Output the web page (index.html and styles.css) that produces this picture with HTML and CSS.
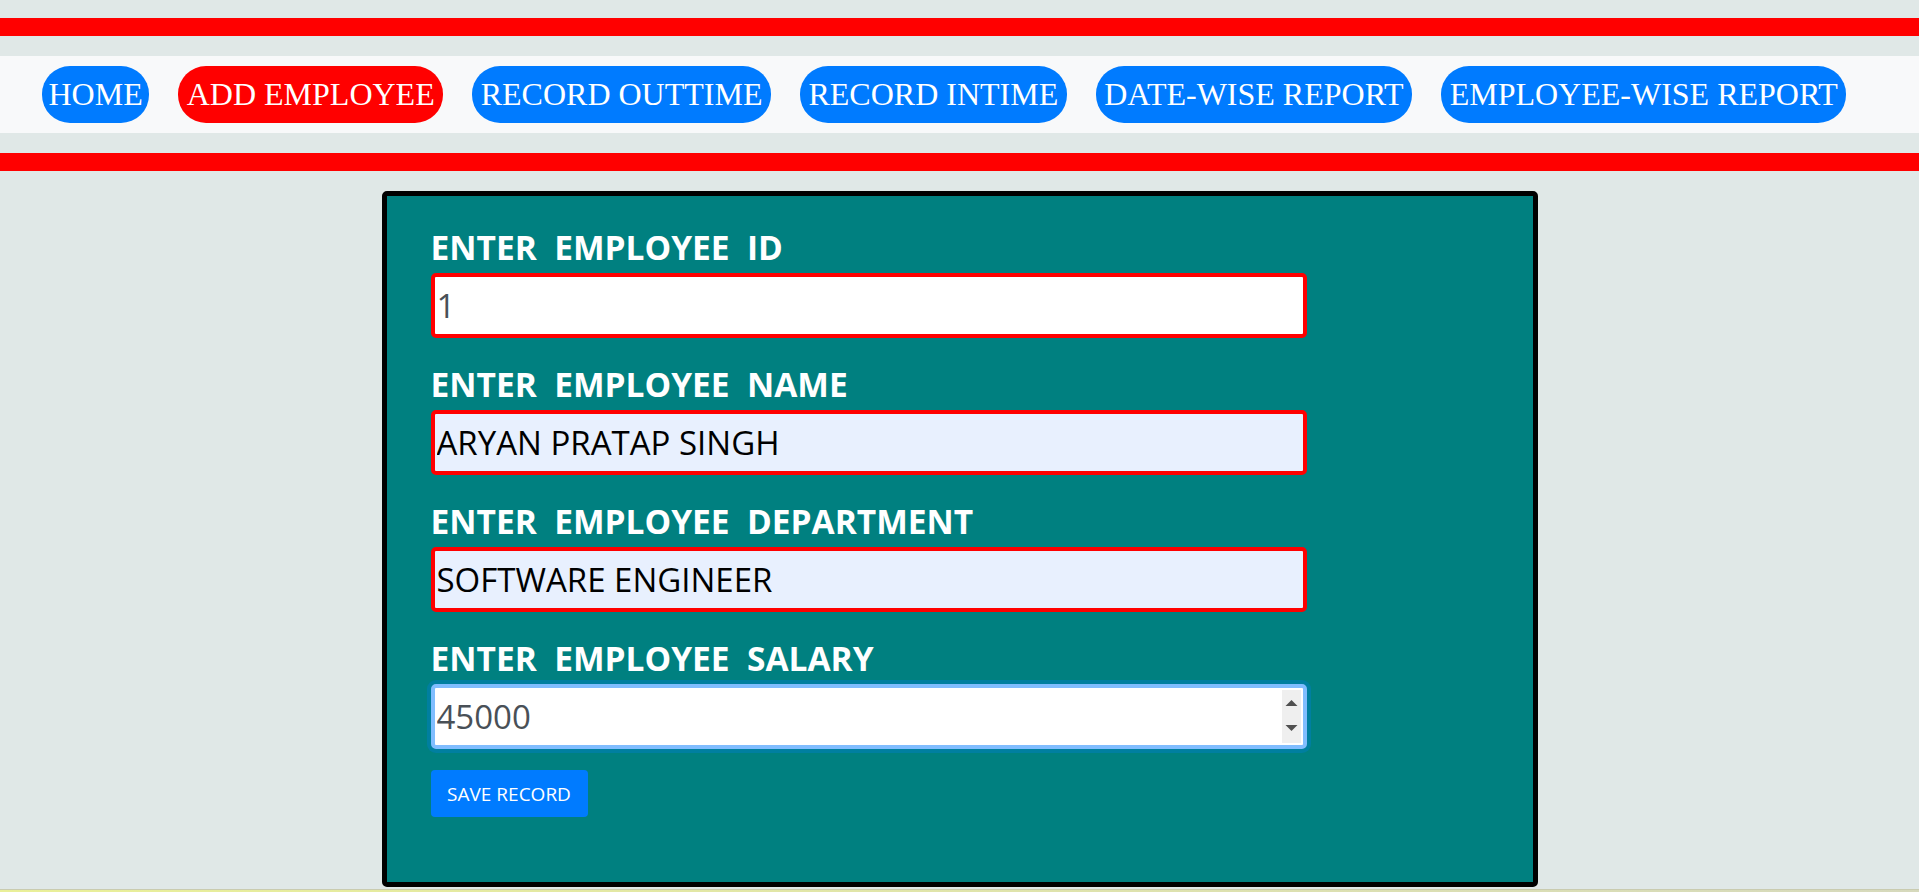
FILE: index.html
```html
<!DOCTYPE html>
<html lang="en">
<head>
<meta charset="utf-8">
<title>Add Employee</title>
<link rel="stylesheet" href="styles.css">
</head>
<body>
<div class="rule rule-top"></div>
<nav class="nav">
  <a class="nav-link" href="#">HOME</a>
  <a class="nav-link active" href="#">ADD EMPLOYEE</a>
  <a class="nav-link" href="#">RECORD OUTTIME</a>
  <a class="nav-link" href="#">RECORD INTIME</a>
  <a class="nav-link" href="#">DATE-WISE REPORT</a>
  <a class="nav-link" href="#">EMPLOYEE-WISE REPORT</a>
</nav>
<div class="rule"></div>
<main class="card">
  <form class="form">
    <div class="group">
      <label class="label">ENTER&nbsp; EMPLOYEE&nbsp; ID</label>
      <input class="field-input" type="text" value="1">
    </div>
    <div class="group">
      <label class="label">ENTER&nbsp; EMPLOYEE&nbsp; NAME</label>
      <input class="field-input autofill" type="text" value="ARYAN PRATAP SINGH">
    </div>
    <div class="group">
      <label class="label">ENTER&nbsp; EMPLOYEE&nbsp; DEPARTMENT</label>
      <input class="field-input autofill" type="text" value="SOFTWARE ENGINEER">
    </div>
    <div class="group group-last">
      <label class="label">ENTER&nbsp; EMPLOYEE&nbsp; SALARY</label>
      <div class="field-focus">
        <input class="field-plain" type="text" value="45000">
        <span class="spinner">
          <svg width="19" height="52" viewBox="0 0 19 52"><polygon points="3.5,16 15.5,16 9.5,10" fill="#505050"/><polygon points="3.5,35 15.5,35 9.5,41" fill="#505050"/></svg>
        </span>
      </div>
    </div>
    <button class="save" type="button">SAVE RECORD</button>
  </form>
</main>
<div class="strip"></div>
</body>
</html>
```
FILE: styles.css
```css
html, body {
  margin: 0;
  padding: 0;
}
body {
  background: #e0e8e7;
  font-family: "Open Sans", "Noto Sans", sans-serif;
  height: 892px;
  overflow: hidden;
}
.rule {
  height: 18px;
  background: #ff0000;
  margin-top: 20px;
}
.rule-top {
  margin-top: 18px;
}
.nav {
  margin-top: 20px;
  background: #f8f9fa;
  padding: 10px 42px;
  display: flex;
  gap: 29px;
}
.nav-link {
  display: block;
  font-family: "Liberation Serif", "Times New Roman", serif;
  font-size: 32px;
  line-height: 37px;
  padding: 10px 8.5px;
  border-radius: 28px;
  background: #007bff;
  color: #ffffff;
  text-decoration: none;
  white-space: nowrap;
}
.nav-link:first-child {
  padding: 10px 6.5px;
}
.nav-link.active {
  background: #ff0000;
}
.card {
  box-sizing: border-box;
  width: 1156px;
  margin: 20px auto 0;
  border: 5px solid #000;
  border-radius: 5px;
  background: #008080;
  padding: 32px 44px 65px;
}
.form {
  margin: 0;
}
.group {
  margin-bottom: 27px;
}
.group-last {
  margin-bottom: 21px;
}
.label {
  display: block;
  color: #ffffff;
  font-weight: 700;
  font-size: 33.5px;
  line-height: 38px;
  margin-bottom: 7px;
  white-space: nowrap;
}
.field-input {
  display: block;
  box-sizing: border-box;
  width: 876px;
  height: 65px;
  border: 4px solid #ff0000;
  border-radius: 5px;
  padding: 0 2px;
  font-family: "Open Sans", "Noto Sans", sans-serif;
  font-size: 33px;
  color: #495057;
  background: #ffffff;
  outline: none;
}
.field-input.autofill {
  background: #e8f0fe;
  color: #000000;
}
.field-focus {
  box-sizing: border-box;
  width: 876px;
  height: 65px;
  border: 4px solid #80bdff;
  border-radius: 5px;
  box-shadow: 0 0 0 4px rgba(0, 123, 255, 0.25);
  background: #ffffff;
  display: flex;
  align-items: stretch;
}
.field-plain {
  flex: 1;
  min-width: 0;
  border: none;
  outline: none;
  background: transparent;
  padding: 0 2px;
  font-family: "Open Sans", "Noto Sans", sans-serif;
  font-size: 33px;
  color: #495057;
}
.spinner {
  display: block;
  width: 19px;
  margin: 2px 2px 2px 0;
  background: #efefef;
}
.spinner svg {
  display: block;
}
.save {
  display: block;
  width: 157px;
  height: 47px;
  border: none;
  border-radius: 4px;
  background: #007bff;
  color: #ffffff;
  font-family: "Open Sans", "Noto Sans", sans-serif;
  font-size: 19px;
  padding: 0;
}
.strip {
  margin-top: 2px;
  height: 2px;
  border-top: 1px solid #c9cbb0;
  background: linear-gradient(to right, #e9ef98, #d6d9bc);
}
```
